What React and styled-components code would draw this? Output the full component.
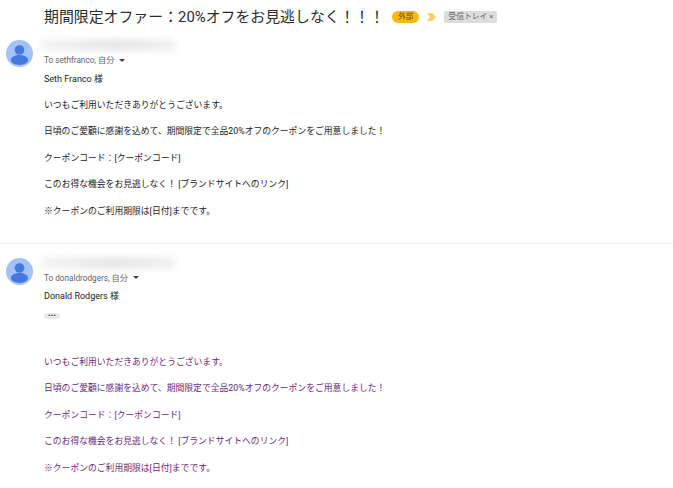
import React from "react"
import styled, { createGlobalStyle } from "styled-components"

const GlobalStyle = createGlobalStyle`
  html, body {
    margin: 0;
    background: #fff;
    overflow: hidden;
  }
  body {
    font-family: Roboto, "Noto Sans CJK JP", sans-serif;
  }
`

const Page = styled.div`
  width: 673px;
  height: 488px;
  overflow: hidden;
  padding-top: 6px;
  box-sizing: border-box;
`

const SubjectRow = styled.div`
  display: flex;
  align-items: center;
  height: 22px;
  padding-left: 44px;
`

const Subject = styled.h1`
  margin: 0;
  font-size: 14.9px;
  font-weight: 400;
  color: #2b2c2f;
  line-height: 22px;
  white-space: nowrap;
`

const ExternalBadge = styled.span`
  margin-left: 8px;
  width: 27px;
  height: 12px;
  border-radius: 6px;
  background: #fbb80f;
  color: #5f4a10;
  font-size: 7.5px;
  line-height: 12px;
  text-align: center;
`

const Marker = styled.svg`
  margin-left: 8px;
  width: 9px;
  height: 8px;
  display: block;
`

const LabelChip = styled.span`
  margin-left: 8px;
  height: 12px;
  padding: 0 4px;
  border-radius: 2px;
  background: #dddddd;
  color: #666;
  font-size: 7.8px;
  line-height: 12px;
  white-space: nowrap;
`

const Message = styled.article`
  display: grid;
  grid-template-columns: 33px 1fr;
  column-gap: 11px;
  margin-top: ${p => p.$top || 0}px;
`

const Avatar = styled.svg`
  width: 27px;
  height: 27px;
  margin: 1px 0 0 6px;
  display: block;
`

const Sender = styled.div`
  width: 134px;
  height: 12px;
  margin-left: -3px;
  background: linear-gradient(90deg, #f4f4f4, #e6e6e6 55%, #f1f1f1);
  filter: blur(3px);
`

const Recipient = styled.div`
  margin-top: 3px;
  font-size: 8.2px;
  line-height: 12px;
  color: #5f6368;
  display: flex;
  align-items: center;
`

const Caret = styled.span`
  margin-left: 5px;
  width: 0;
  height: 0;
  border-left: 3px solid transparent;
  border-right: 3px solid transparent;
  border-top: 3px solid #444;
`

const Body = styled.div`
  margin-top: ${p => p.$gap}px;
  color: ${p => p.$tint || "#222"};
  font-size: 8.8px;
  line-height: 13px;
`

const Para = styled.p`
  margin: 0 0 13.4px;
  white-space: nowrap;
`

const Greeting = styled.div`
  margin-top: ${p => p.$top}px;
  font-size: 9px;
  line-height: 13px;
  color: #222;
`

const Ellipsis = styled.div`
  margin-top: 10px;
  width: 16px;
  height: 6px;
  border-radius: 3px;
  background: #e8eaed;
  color: #444;
  font-size: 8px;
  line-height: 5px;
  text-align: center;
`

const Divider = styled.hr`
  margin: 12px 0 0;
  border: 0;
  border-top: 1px solid #f1f1f1;
`

const AvatarIcon = () => (
  <Avatar viewBox="0 0 27 27">
    <circle cx="13.5" cy="13.5" r="13.5" fill="#a3c2fa" />
    <circle cx="13.5" cy="10" r="4.8" fill="#4378dc" />
    <ellipse cx="13.5" cy="20" rx="8.6" ry="4.9" fill="#4378dc" />
  </Avatar>
)

const paragraphs = [
  "いつもご利用いただきありがとうございます。",
  "日頃のご愛顧に感謝を込めて、期間限定で全品20%オフのクーポンをご用意しました！",
  "クーポンコード：[クーポンコード]",
  "このお得な機会をお見逃しなく！ [ブランドサイトへのリンク]",
  "※クーポンのご利用期限は[日付]までです。",
]

const App = () => (
  <Page>
    <GlobalStyle />
    <SubjectRow>
      <Subject>期間限定オファー：20%オフをお見逃しなく！！！</Subject>
      <ExternalBadge>外部</ExternalBadge>
      <Marker viewBox="0 0 9 8">
        <path d="M0 0h5l4 4-4 4H0l3-4z" fill="#f7cf5d" />
      </Marker>
      <LabelChip>受信トレイ ×</LabelChip>
    </SubjectRow>

    <Message $top={11}>
      <AvatarIcon />
      <div>
        <Sender />
        <Recipient>
          To sethfranco, 自分<Caret />
        </Recipient>
        <Greeting $top={7}>Seth Franco 様</Greeting>
        <Body $gap={13}>
          {paragraphs.map(text => (
            <Para key={text}>{text}</Para>
          ))}
        </Body>
      </div>
    </Message>

    <Divider />

    <Message $top={13}>
      <AvatarIcon />
      <div>
        <Sender />
        <Recipient>
          To donaldrodgers, 自分<Caret />
        </Recipient>
        <Greeting $top={6}>Donald Rodgers 様</Greeting>
        <Ellipsis>•••</Ellipsis>
        <Body $gap={37} $tint="#6b2a78">
          {paragraphs.map(text => (
            <Para key={text}>{text}</Para>
          ))}
        </Body>
      </div>
    </Message>
  </Page>
)

export default App
